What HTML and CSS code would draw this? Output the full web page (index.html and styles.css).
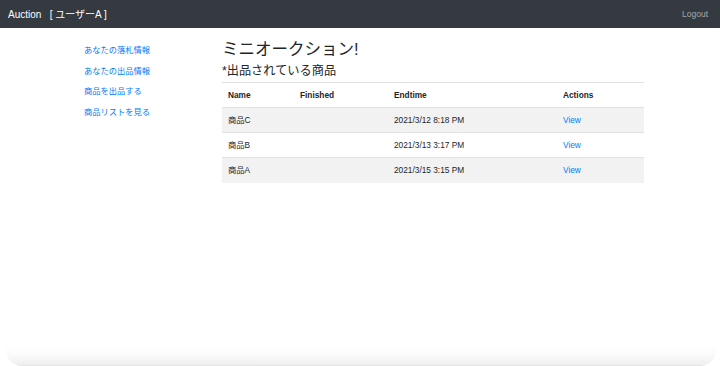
FILE: index.html
```html
<!DOCTYPE html>
<html lang="ja">
<head>
    <meta charset="UTF-8">
    <meta name="viewport" content="width=device-width, initial-scale=1.0">
    <title>Auction</title>
    <link rel="stylesheet" href="styles.css">
</head>
<body>
    <!-- Navbar -->
    <nav class="navbar">
        <a class="brand" href="#">Auction &nbsp;&nbsp;[ ユーザーA ]</a>
        <a class="logout" href="#">Logout</a>
    </nav>

    <div class="main">
        <!-- Side menu -->
        <ul class="side-menu">
            <li><a href="#">あなたの落札情報</a></li>
            <li><a href="#">あなたの出品情報</a></li>
            <li><a href="#">商品を出品する</a></li>
            <li><a href="#">商品リストを見る</a></li>
        </ul>

        <!-- Content -->
        <div class="content">
            <h1>ミニオークション!</h1>
            <h3>*出品されている商品</h3>
            <table class="items">
                <thead>
                    <tr>
                        <th class="col-name">Name</th>
                        <th class="col-finished">Finished</th>
                        <th class="col-endtime">Endtime</th>
                        <th>Actions</th>
                    </tr>
                </thead>
                <tbody>
                    <tr>
                        <td>商品C</td>
                        <td></td>
                        <td>2021/3/12 8:18 PM</td>
                        <td><a href="#">View</a></td>
                    </tr>
                    <tr>
                        <td>商品B</td>
                        <td></td>
                        <td>2021/3/13 3:17 PM</td>
                        <td><a href="#">View</a></td>
                    </tr>
                    <tr>
                        <td>商品A</td>
                        <td></td>
                        <td>2021/3/15 3:15 PM</td>
                        <td><a href="#">View</a></td>
                    </tr>
                </tbody>
            </table>
        </div>
    </div>

    <div class="bottom-shade"></div>
</body>
</html>
```

FILE: styles.css
```css
* {
    margin: 0;
    padding: 0;
    box-sizing: border-box;
}

html, body {
    height: 100%;
}

body {
    font-family: "Liberation Sans", "Noto Sans CJK JP", sans-serif;
    font-size: 8.3px;
    line-height: 1.5;
    color: #212529;
    background-color: #ffffff;
    display: flex;
    flex-direction: column;
    overflow: hidden;
}

a {
    color: #007bff;
    text-decoration: none;
}

.navbar {
    height: 28px;
    background-color: #343a40;
    display: flex;
    align-items: center;
    justify-content: space-between;
    padding: 0 12px 0 8px;
    flex-shrink: 0;
}

.brand {
    color: #ffffff;
    font-size: 10px;
}

.logout {
    color: rgba(255, 255, 255, 0.55);
    font-size: 8.5px;
}

.main {
    display: flex;
    padding-top: 11px;
}

.side-menu {
    list-style: none;
    width: 222px;
    padding-left: 84px;
    padding-top: 5px;
}

.side-menu li {
    height: 20.5px;
}

.side-menu a {
    font-size: 8.25px;
}

.content {
    width: 422px;
}

h1 {
    font-size: 16.5px;
    font-weight: 400;
    line-height: 20px;
    margin-bottom: 5px;
}

h3 {
    font-size: 12.2px;
    font-weight: 400;
    line-height: 14px;
    margin-bottom: 4px;
}

.items {
    width: 100%;
    border-collapse: collapse;
}

.items th,
.items td {
    text-align: left;
    padding: 6px;
    height: 25px;
    line-height: 12px;
    border-top: 1px solid #dee2e6;
    vertical-align: middle;
}

.items th {
    font-weight: bold;
    border-bottom: 1px solid #dee2e6;
}

.items tbody tr:nth-child(odd) {
    background-color: #f2f2f2;
}

.col-name {
    width: 72px;
}

.col-finished {
    width: 94px;
}

.col-endtime {
    width: 169px;
}

.bottom-shade {
    margin-top: auto;
    height: 22px;
    margin-left: 6px;
    margin-right: 4px;
    border-radius: 0 0 16px 16px;
    background: linear-gradient(#ffffff, #fcfcfc 40%, #f0f0f0 92%, #e2e2e2);
    flex-shrink: 0;
}
```
